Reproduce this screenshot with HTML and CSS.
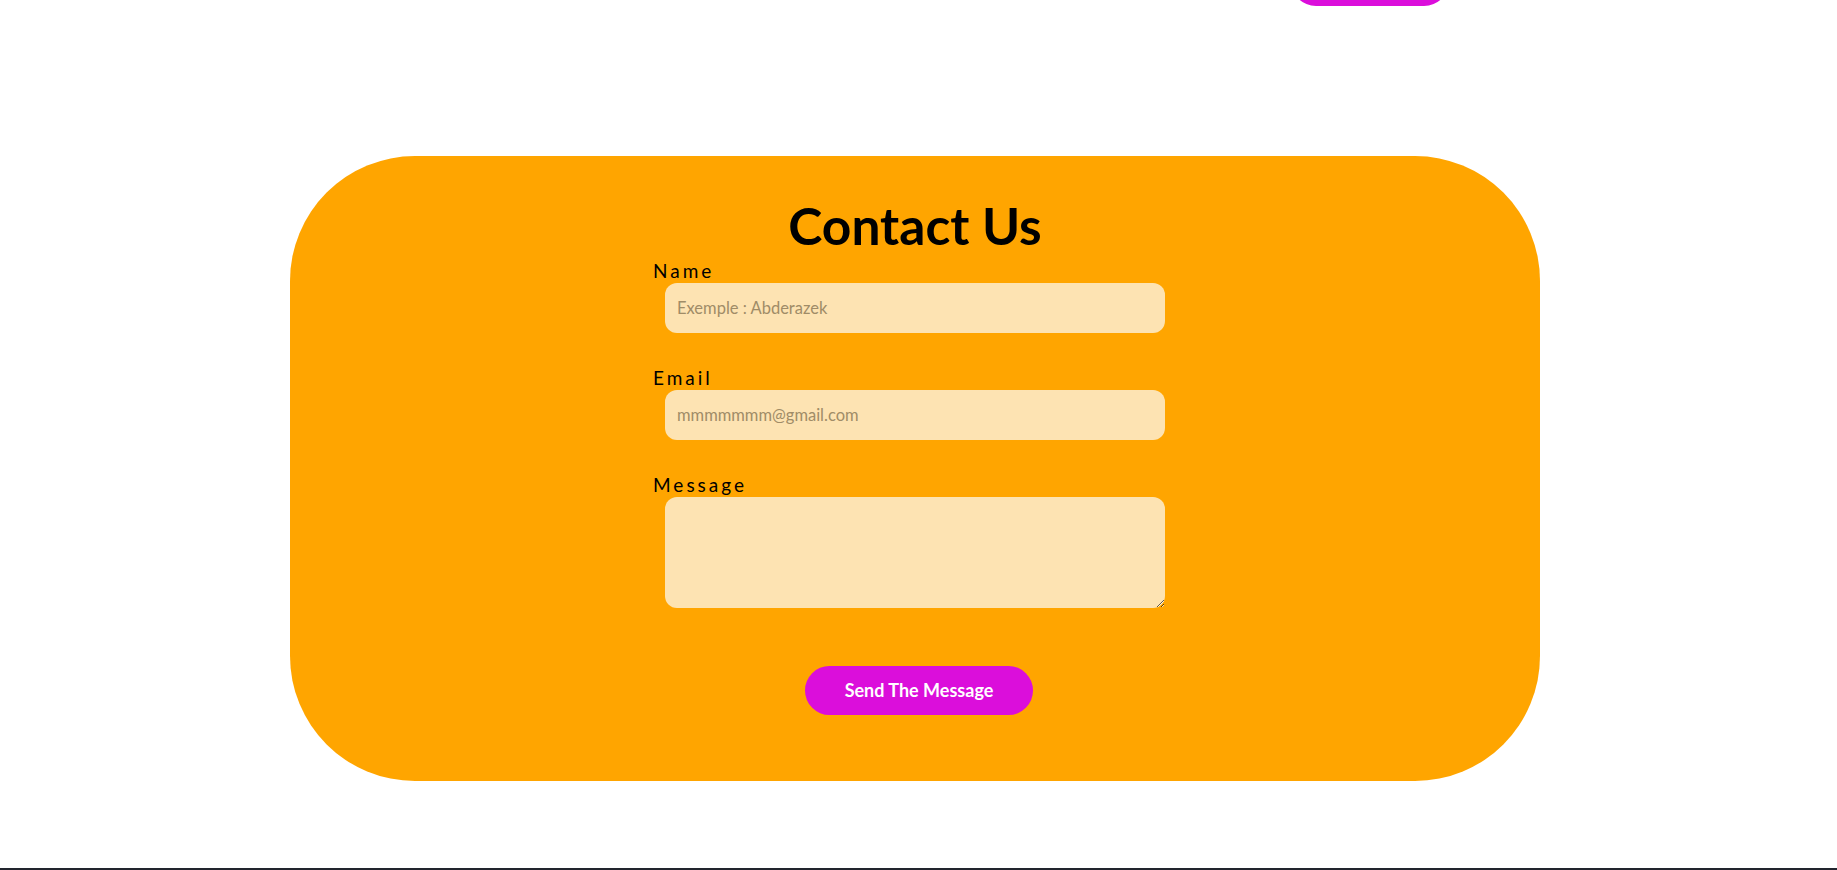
FILE: index.html
```html
<!DOCTYPE html>
<html lang="en">
<head>
<meta charset="utf-8">
<title>Contact Us</title>
<link rel="stylesheet" href="styles.css">
</head>
<body>
  <header class="topbar">
    <button class="nav-btn" type="button" aria-label="Contact"></button>
  </header>
  <main class="page">
    <section class="contact">
      <h1 class="contact-title">Contact Us</h1>
      <form class="contact-form">
        <label class="field-label" for="name">Name</label>
        <input class="field" id="name" type="text" placeholder="Exemple : Abderazek">
        <label class="field-label" for="email">Email</label>
        <input class="field" id="email" type="email" placeholder="mmmmmmm@gmail.com">
        <label class="field-label" for="msg">Message</label>
        <textarea class="field field-area" id="msg"></textarea>
        <button class="send-btn" type="button">Send The Message</button>
      </form>
    </section>
  </main>
  <footer class="footer"></footer>
</body>
</html>
```

FILE: styles.css
```css
* { box-sizing: border-box; }

html, body {
  margin: 0;
  padding: 0;
  background: #ffffff;
  font-family: "Lato", "Noto Sans", sans-serif;
  overflow: hidden;
}

.topbar {
  height: 6px;
  overflow: hidden;
  display: flex;
  align-items: flex-end;
  padding-left: 1291px;
}

.nav-btn {
  flex: none;
  width: 158px;
  height: 50px;
  border: none;
  border-radius: 25px;
  background: #db0edb;
}

.page {
  padding-top: 150px;
  height: 862px;
}

.contact {
  margin-left: 290px;
  width: 1250px;
  height: 625px;
  background: #ffa500;
  border-radius: 125px;
  padding-top: 39px;
  display: flex;
  flex-direction: column;
  align-items: center;
}

.contact-title {
  margin: 0;
  font-size: 51.5px;
  line-height: 1.2;
  font-weight: 700;
  color: #000;
}

.contact-title + .contact-form {
  margin-top: 2px;
}

.contact-form {
  width: 500px;
  display: flex;
  flex-direction: column;
}

.field-label {
  margin-left: -12px;
  font-size: 19px;
  line-height: 23px;
  letter-spacing: 3px;
  color: #000;
}

.field {
  margin-top: 1px;
  width: 500px;
  height: 50px;
  border: none;
  outline: none;
  border-radius: 12px;
  background: #fde3b2;
  padding: 0 12px;
  font-family: "Lato", "Noto Sans", sans-serif;
  font-size: 16.5px;
  color: #333;
  margin-bottom: 33px;
}

.field::placeholder {
  color: #a08c67;
}

.field-area {
  height: 111px;
  padding: 10px 12px;
  margin-bottom: 58px;
}

.send-btn {
  align-self: center;
  margin-left: 8px;
  width: 228px;
  height: 49px;
  border: none;
  border-radius: 25px;
  background: #db0edb;
  color: #ffffff;
  font-family: "Lato", "Noto Sans", sans-serif;
  font-size: 18px;
  font-weight: 700;
  cursor: pointer;
}

.footer {
  height: 10px;
  background: #22252e;
}
```
